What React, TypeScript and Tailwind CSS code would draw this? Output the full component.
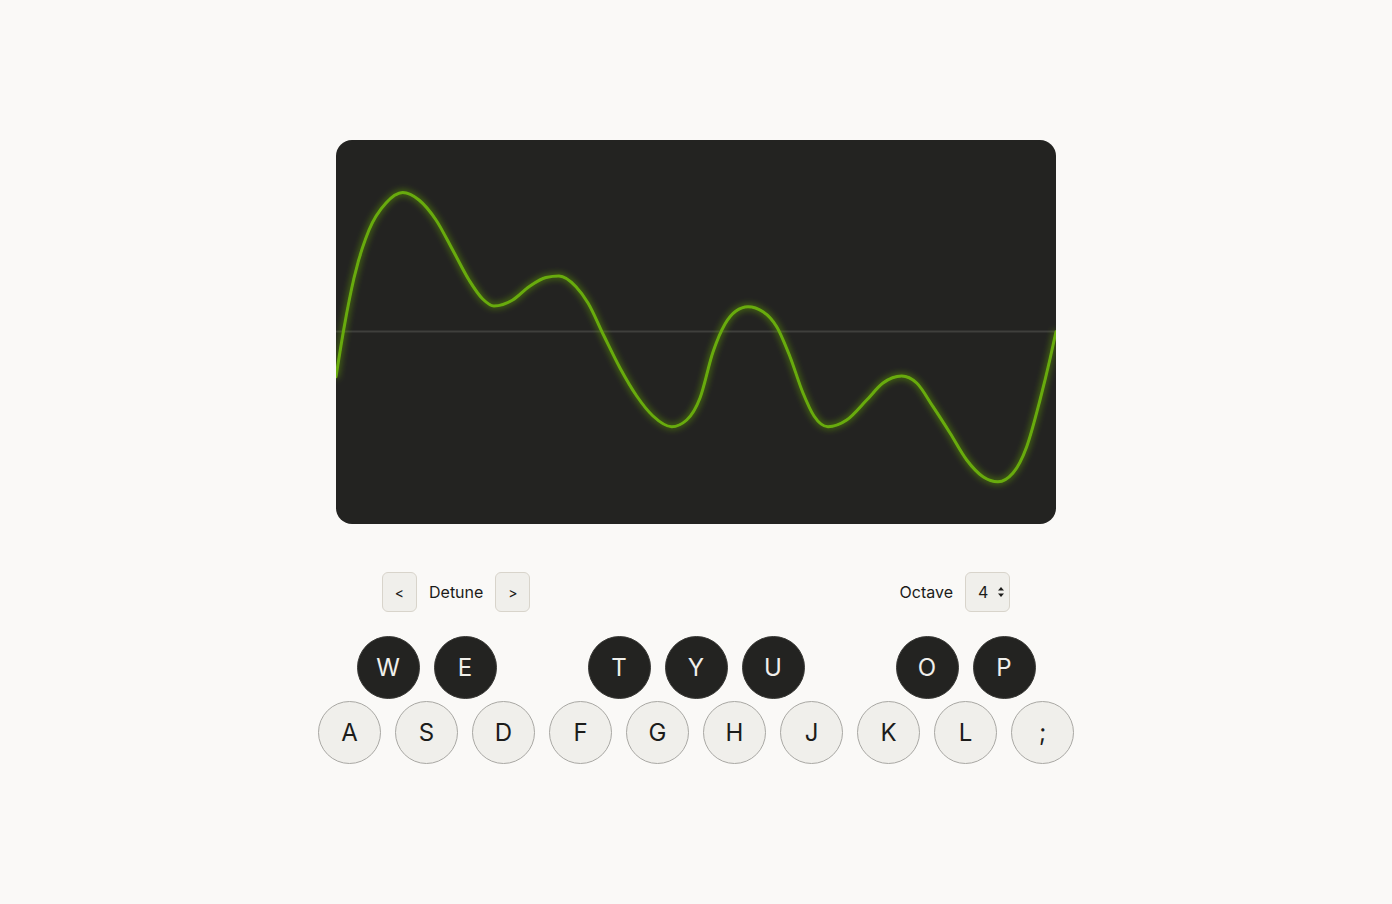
import React from "react";

const PTS: [number, number][] = [
  [0, 236.7], [8, 188], [18, 138], [33, 90], [50, 63], [66.7, 52.5], [83, 60], [100, 80],
  [116.7, 110], [133, 140], [146.7, 159], [158, 166], [176.7, 160], [193, 146.7], [210, 137.5],
  [223, 136], [240, 146.7], [252, 163], [268, 196], [284, 228], [300.7, 256], [317, 276],
  [335.7, 286.7], [350.7, 280], [364, 258], [377, 212], [389, 184], [400, 171], [412, 166.7],
  [427, 171.7], [440.7, 186.7], [454, 216.7], [467, 253], [478, 276], [492, 286.7], [510.7, 280],
  [530.7, 260], [547, 243], [565.7, 236], [580.7, 243], [597, 266.7], [614, 293], [630.7, 320],
  [647, 336.7], [662, 341.7], [677, 333], [690.7, 306.7], [704, 260], [714, 219], [720, 191.7],
];

function monotonePath(p: [number, number][]) {
  const n = p.length;
  const sgn = (v: number) => (v < 0 ? -1 : 1);
  const t: number[] = new Array(n).fill(0);
  for (let i = 1; i < n - 1; i++) {
    const [x0, y0] = p[i - 1];
    const [x1, y1] = p[i];
    const [x2, y2] = p[i + 1];
    const h0 = x1 - x0;
    const h1 = x2 - x1;
    const s0 = (y1 - y0) / h0;
    const s1 = (y2 - y1) / h1;
    const pp = (s0 * h1 + s1 * h0) / (h0 + h1);
    t[i] = (sgn(s0) + sgn(s1)) * Math.min(Math.abs(s0), Math.abs(s1), 0.5 * Math.abs(pp)) || 0;
  }
  {
    const h = p[1][0] - p[0][0];
    t[0] = (3 * (p[1][1] - p[0][1]) / h - t[1]) / 2;
    const h2 = p[n - 1][0] - p[n - 2][0];
    t[n - 1] = (3 * (p[n - 1][1] - p[n - 2][1]) / h2 - t[n - 2]) / 2;
  }
  let d = `M ${p[0][0]} ${p[0][1]}`;
  for (let i = 0; i < n - 1; i++) {
    const [x0, y0] = p[i];
    const [x1, y1] = p[i + 1];
    const dx = (x1 - x0) / 3;
    d += ` C ${(x0 + dx).toFixed(2)} ${(y0 + dx * t[i]).toFixed(2)} ${(x1 - dx).toFixed(2)} ${(y1 - dx * t[i + 1]).toFixed(2)} ${x1} ${y1}`;
  }
  return d;
}

const BLACK = ["W", "E", "", "T", "Y", "U", "", "O", "P"];
const WHITE = ["A", "S", "D", "F", "G", "H", "J", "K", "L", ";"];

export default function App() {
  const d = monotonePath(PTS);
  return (
    <div
      className="min-h-screen w-full bg-[#faf9f7] flex flex-col items-center pt-[140px] text-[#1c1c1a]"
      style={{ fontFamily: "Inter, 'Liberation Sans', sans-serif" }}
    >
      <div className="w-[720px] h-[384px] rounded-[16px] bg-[#232321] overflow-hidden">
        <svg width="720" height="384" viewBox="0 0 720 384">
          <defs>
            <filter id="glow" x="-10%" y="-20%" width="120%" height="140%">
              <feGaussianBlur in="SourceGraphic" stdDeviation="3.5" result="blur" />
              <feMerge>
                <feMergeNode in="blur" />
                <feMergeNode in="SourceGraphic" />
              </feMerge>
            </filter>
          </defs>
          <line x1="0" y1="191.5" x2="720" y2="191.5" stroke="#3f3f3c" strokeWidth="2" />
          <path d={d} fill="none" stroke="#68ab0c" strokeWidth="3" strokeLinecap="round" strokeLinejoin="round" filter="url(#glow)" />
        </svg>
      </div>

      <div className="mt-[48px] w-[628px] flex items-center justify-between">
        <div className="flex items-center gap-3">
          <button className="w-[35px] h-[40px] rounded-[6px] bg-[#f0efeb] border border-[#d8d4cb] text-[14px] flex items-center justify-center">
            &lt;
          </button>
          <span className="text-[16px]">Detune</span>
          <button className="w-[35px] h-[40px] rounded-[6px] bg-[#f0efeb] border border-[#d8d4cb] text-[14px] flex items-center justify-center">
            &gt;
          </button>
        </div>
        <div className="flex items-center gap-3">
          <span className="text-[16px]">Octave</span>
          <div className="w-[45px] h-[40px] rounded-[6px] bg-[#f0efeb] border border-[#d8d4cb] flex items-center pl-[12px] pr-[4px] justify-between">
            <span className="text-[16px]">4</span>
            <svg width="8" height="12" viewBox="0 0 8 12">
              <path d="M4 1 L7 4.5 L1 4.5 Z" fill="#1c1c1a" />
              <path d="M4 11 L7 7.5 L1 7.5 Z" fill="#1c1c1a" />
            </svg>
          </div>
        </div>
      </div>

      <div className="mt-[24px] flex gap-[14px]">
        {BLACK.map((k, i) =>
          k ? (
            <div
              key={i}
              className="w-[63px] h-[63px] rounded-full bg-[#232321] border border-[#3a3a37] text-[#f0efeb] text-[24px] flex items-center justify-center"
            >
              {k}
            </div>
          ) : (
            <div key={i} className="w-[63px] h-[63px]" />
          )
        )}
      </div>
      <div className="mt-[2px] flex gap-[14px]">
        {WHITE.map((k) => (
          <div
            key={k}
            className="w-[63px] h-[63px] rounded-full bg-[#f0efeb] border border-[#a9a8a4] text-[#1c1c1a] text-[24px] flex items-center justify-center"
          >
            {k}
          </div>
        ))}
      </div>
    </div>
  );
}
